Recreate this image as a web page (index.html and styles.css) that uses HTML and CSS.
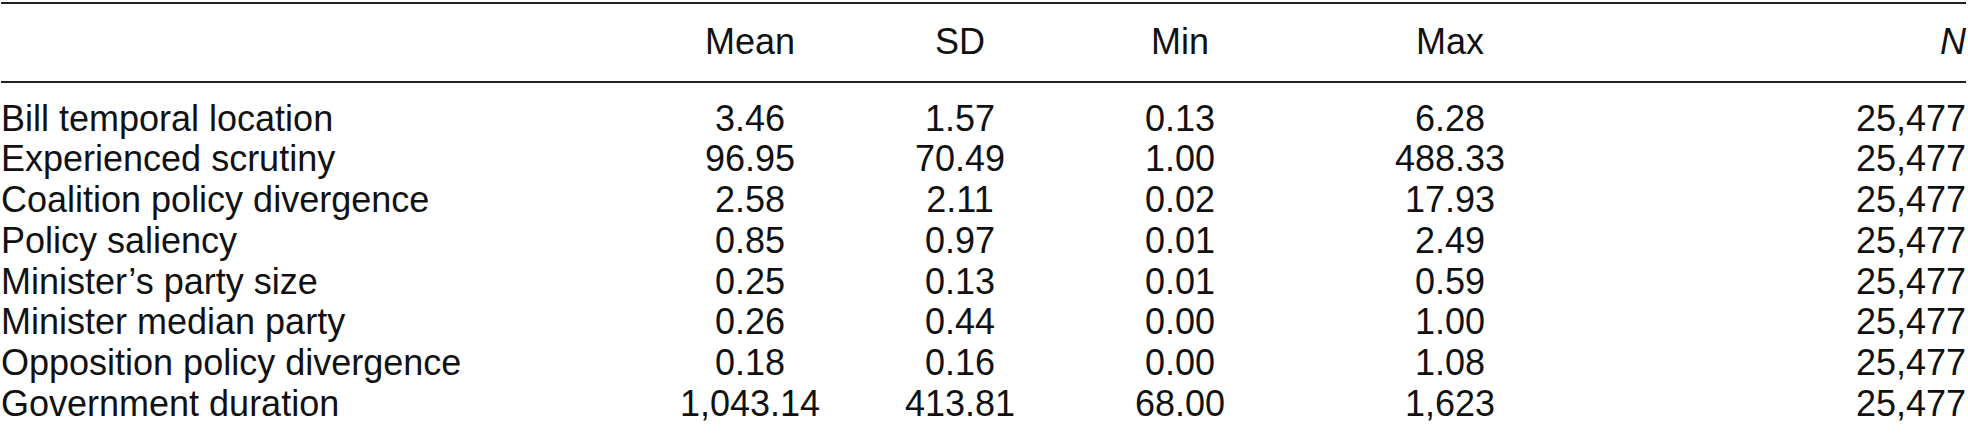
FILE: index.html
```html
<!DOCTYPE html>
<html>
<head>
<meta charset="utf-8">
<link rel="stylesheet" href="styles.css">
</head>
<body>
<table class="stats">
  <colgroup>
    <col class="c-label"><col class="c-mean"><col class="c-sd"><col class="c-min"><col class="c-max"><col class="c-n">
  </colgroup>
  <thead>
    <tr><th></th><th>Mean</th><th>SD</th><th>Min</th><th>Max</th><th class="n"><i>N</i></th></tr>
  </thead>
  <tbody>
    <tr class="first"><td>Bill temporal location</td><td>3.46</td><td>1.57</td><td>0.13</td><td>6.28</td><td class="n">25,477</td></tr>
    <tr><td>Experienced scrutiny</td><td>96.95</td><td>70.49</td><td>1.00</td><td>488.33</td><td class="n">25,477</td></tr>
    <tr><td>Coalition policy divergence</td><td>2.58</td><td>2.11</td><td>0.02</td><td>17.93</td><td class="n">25,477</td></tr>
    <tr><td>Policy saliency</td><td>0.85</td><td>0.97</td><td>0.01</td><td>2.49</td><td class="n">25,477</td></tr>
    <tr><td>Minister’s party size</td><td>0.25</td><td>0.13</td><td>0.01</td><td>0.59</td><td class="n">25,477</td></tr>
    <tr><td>Minister median party</td><td>0.26</td><td>0.44</td><td>0.00</td><td>1.00</td><td class="n">25,477</td></tr>
    <tr><td>Opposition policy divergence</td><td>0.18</td><td>0.16</td><td>0.00</td><td>1.08</td><td class="n">25,477</td></tr>
    <tr><td>Government duration</td><td>1,043.14</td><td>413.81</td><td>68.00</td><td>1,623</td><td class="n">25,477</td></tr>
  </tbody>
</table>
</body>
</html>
```

FILE: styles.css
```css
html, body {
  margin: 0;
  padding: 0;
  background: #fff;
}
body {
  padding: 2px 2px 0 1px;
  font-family: "Liberation Sans", Arial, sans-serif;
  color: #111;
}
.stats {
  width: 100%;
  border-collapse: collapse;
  table-layout: fixed;
  font-size: 36px;
  line-height: 40.7px;
}
.c-label { width: 639px; }
.c-mean { width: 220px; }
.c-sd { width: 200px; }
.c-min { width: 240px; }
.c-max { width: 300px; }
.stats th {
  font-weight: normal;
  text-align: center;
  padding: 18px 0 18px;
  border-top: 2px solid #222;
  border-bottom: 2px solid #222;
}
.stats td {
  padding: 0;
  text-align: center;
  white-space: nowrap;
}
.stats td:first-child {
  text-align: left;
}
.stats .n {
  text-align: right;
}
.stats tr.first td {
  padding-top: 16px;
}
```
